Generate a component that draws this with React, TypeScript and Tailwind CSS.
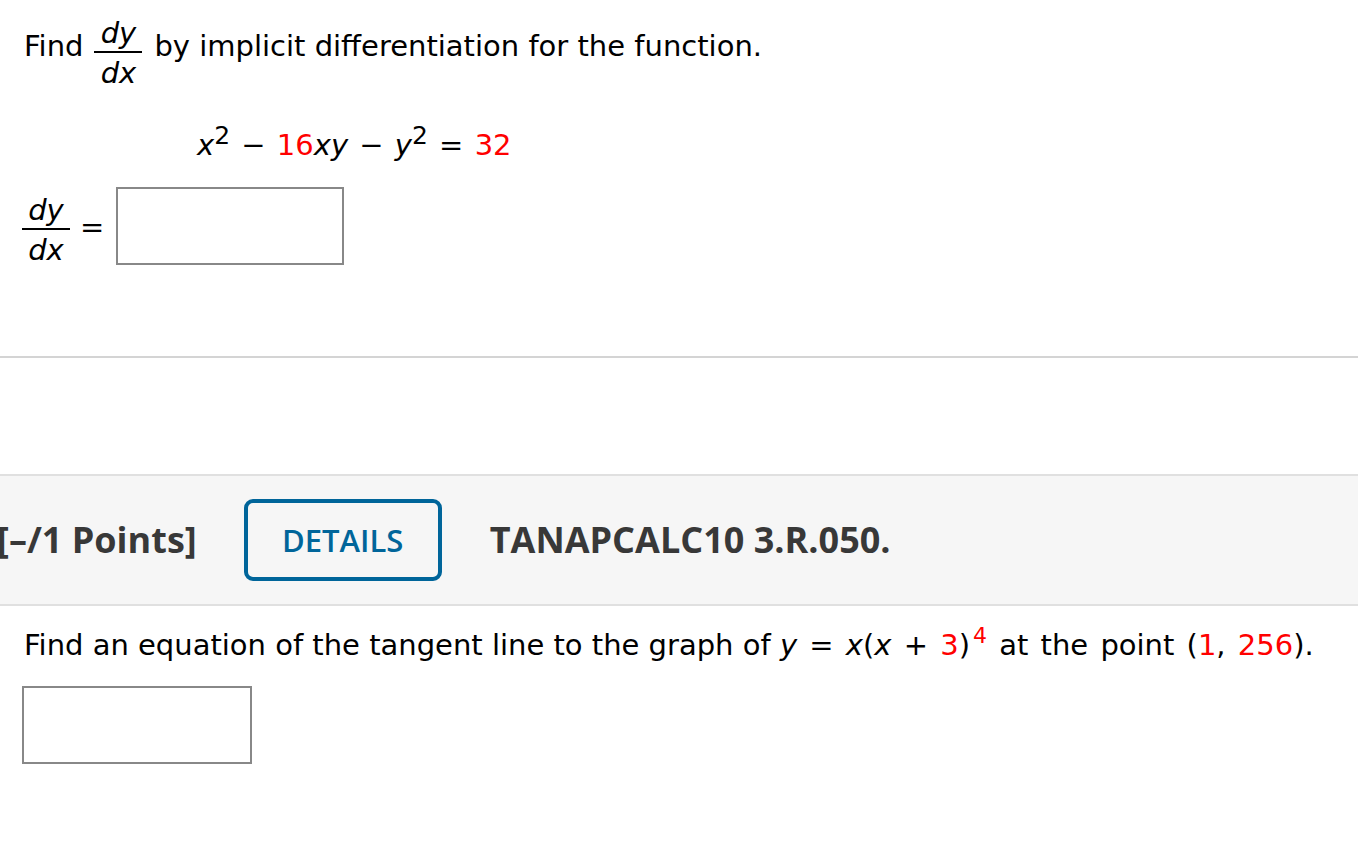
import React from "react";

function Frac({ top, bottom }: { top: string; bottom: string }) {
  return (
    <span className="flex flex-col items-center w-[48px] italic">
      <span className="leading-[30px]">{top}</span>
      <span className="block w-full h-[2px] bg-black mt-[3px] mb-[5px]" />
      <span className="leading-[30px]">{bottom}</span>
    </span>
  );
}

function Red({ children }: { children: React.ReactNode }) {
  return <span className="text-[#f00]">{children}</span>;
}

export default function App() {
  return (
    <div className="min-h-screen bg-white text-black" style={{ fontFamily: '"DejaVu Sans", Verdana, sans-serif' }}>
      {/* First question */}
      <div className="pl-[24px] pt-[18px] text-[29px]">
        <div className="flex items-start">
          <span className="leading-[30px] mt-[13px]">Find</span>
          <span className="ml-[11px]">
            <Frac top="dy" bottom="dx" />
          </span>
          <span className="leading-[30px] mt-[13px] ml-[12px]">
            by implicit differentiation for the function.
          </span>
        </div>

        <p className="pl-[173px] mt-[42px] leading-[30px] whitespace-nowrap [word-spacing:2px]">
          <i>x</i>
          <span className="text-[25px] relative -top-[11px]">2</span> − <Red>16</Red>
          <i>xy</i> − <i>y</i>
          <span className="text-[25px] relative -top-[11px]">2</span> = <Red>32</Red>
        </p>

        <div className="flex items-start mt-[25px] -ml-[2px]">
          <span className="mt-[8px]">
            <Frac top="dy" bottom="dx" />
          </span>
          <span className="w-[24px] ml-[10px] mt-[25px] leading-[30px] text-center">=</span>
          <div className="ml-[12px] w-[228px] h-[78px] border-2 border-[#888]" />
        </div>
      </div>

      <div className="mt-[91px] border-t-2 border-[#d4d4d4]" />
      <div className="h-[116px]" />

      {/* Header band */}
      <div
        className="flex items-center h-[132px] bg-[#f6f6f6] border-y-2 border-[#e0e0e0] text-[#383838]"
        style={{ fontFamily: '"Open Sans", sans-serif' }}
      >
        <span className="-ml-[3px] font-bold text-[36px] whitespace-nowrap">[–/1 Points]</span>
        <div className="ml-[47px] w-[198px] h-[82px] border-[4px] border-[#00659a] rounded-[9px] flex items-center justify-center text-[#00659a] text-[31px] font-semibold">
          DETAILS
        </div>
        <span className="ml-[48px] font-bold text-[36px] whitespace-nowrap">TANAPCALC10 3.R.050.</span>
      </div>

      {/* Second question */}
      <div className="pl-[24px] pt-[24px] text-[29px]">
        <p className="leading-[30px] whitespace-nowrap">
          Find an equation of the tangent line to the graph of{" "}
          <span className="[word-spacing:3px]">
            <i>y</i> = <i>x</i>(<i>x</i> + <Red>3</Red>)
            <span className="ml-[3px] text-[22px] relative -top-[12px] text-[#f00]">4</span> at the point (
            <Red>1</Red>, <Red>256</Red>).
          </span>
        </p>
        <div className="mt-[23px] -ml-[2px] w-[230px] h-[78px] border-2 border-[#888]" />
      </div>
    </div>
  );
}
